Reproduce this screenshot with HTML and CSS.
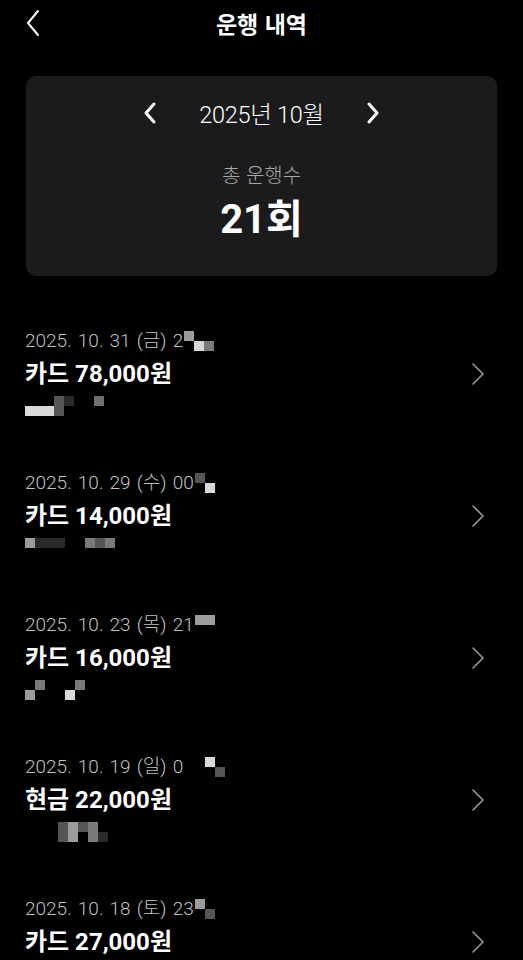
FILE: index.html
```html
<!DOCTYPE html>
<html lang="ko">
<head>
    <meta charset="UTF-8">
    <meta name="viewport" content="width=device-width, initial-scale=1.0">
    <title>운행 내역</title>
    <link rel="stylesheet" href="styles.css">
</head>
<body>
    <header class="topbar">
        <button class="back" aria-label="뒤로">
            <svg width="16" height="28" viewBox="0 0 16 28"><path d="M13 2 L3 14 L13 26" fill="none" stroke="#fff" stroke-width="2" stroke-linecap="round" stroke-linejoin="round"/></svg>
        </button>
        <h1 class="title">운행 내역</h1>
    </header>

    <section class="summary">
        <div class="month-nav">
            <button class="nav-btn" aria-label="이전 달">
                <svg width="14" height="22" viewBox="0 0 14 22"><path d="M11 2 L3 11 L11 20" fill="none" stroke="#fff" stroke-width="3" stroke-linecap="round" stroke-linejoin="round"/></svg>
            </button>
            <span class="month">2025년 10월</span>
            <button class="nav-btn" aria-label="다음 달">
                <svg width="14" height="22" viewBox="0 0 14 22"><path d="M3 2 L11 11 L3 20" fill="none" stroke="#fff" stroke-width="3" stroke-linecap="round" stroke-linejoin="round"/></svg>
            </button>
        </div>
        <div class="total-label">총 운행수</div>
        <div class="total-value">21회</div>
    </section>

    <ul class="trips">
        <li class="trip">
            <div class="trip-info">
                <div class="trip-date">2025. 10. 31 (금) 2<span class="blur"><i class="px g2"></i><i class="px g1 low"></i><i class="px g3 low"></i></span></div>
                <div class="trip-fare">카드 78,000원</div>
                <div class="trip-place"><i class="bar"></i><i class="px g4 tall"></i><i class="px g5"></i><i class="px g6 gap"></i></div>
            </div>
            <svg class="chev" width="14" height="24" viewBox="0 0 14 24"><path d="M2 2 L12 12 L2 22" fill="none" stroke="#9a9a9a" stroke-width="1.6" stroke-linecap="round" stroke-linejoin="round"/></svg>
        </li>
        <li class="trip">
            <div class="trip-info">
                <div class="trip-date">2025. 10. 29 (수) 00<span class="blur"><i class="px g4"></i><i class="px g1 low"></i></span></div>
                <div class="trip-fare">카드 14,000원</div>
                <div class="trip-place"><i class="px g2"></i><i class="px g5"></i><i class="px g5"></i><i class="px g5"></i><i class="px g3 gap"></i><i class="px g4"></i><i class="px g3"></i></div>
            </div>
            <svg class="chev" width="14" height="24" viewBox="0 0 14 24"><path d="M2 2 L12 12 L2 22" fill="none" stroke="#9a9a9a" stroke-width="1.6" stroke-linecap="round" stroke-linejoin="round"/></svg>
        </li>
        <li class="trip">
            <div class="trip-info">
                <div class="trip-date">2025. 10. 23 (목) 21<span class="blur"><i class="px g2"></i><i class="px g2"></i></span></div>
                <div class="trip-fare">카드 16,000원</div>
                <div class="trip-place"><i class="px g2 low"></i><i class="px g3"></i><i class="px g1 low gap"></i><i class="px g3"></i></div>
            </div>
            <svg class="chev" width="14" height="24" viewBox="0 0 14 24"><path d="M2 2 L12 12 L2 22" fill="none" stroke="#9a9a9a" stroke-width="1.6" stroke-linecap="round" stroke-linejoin="round"/></svg>
        </li>
        <li class="trip">
            <div class="trip-info">
                <div class="trip-date">2025. 10. 19 (일) 0<span class="blur wide"><i class="px g1"></i><i class="px g4 low"></i></span></div>
                <div class="trip-fare">현금 22,000원</div>
                <div class="trip-place indent"><i class="px g4 tall"></i><i class="px g2 tall"></i><i class="px g4"></i><i class="px g3 tall"></i><i class="px g5 low"></i></div>
            </div>
            <svg class="chev" width="14" height="24" viewBox="0 0 14 24"><path d="M2 2 L12 12 L2 22" fill="none" stroke="#9a9a9a" stroke-width="1.6" stroke-linecap="round" stroke-linejoin="round"/></svg>
        </li>
        <li class="trip">
            <div class="trip-info">
                <div class="trip-date">2025. 10. 18 (토) 23<span class="blur"><i class="px g2"></i><i class="px g4 low"></i></span></div>
                <div class="trip-fare">카드 27,000원</div>
                <div class="trip-place"></div>
            </div>
            <svg class="chev" width="14" height="24" viewBox="0 0 14 24"><path d="M2 2 L12 12 L2 22" fill="none" stroke="#9a9a9a" stroke-width="1.6" stroke-linecap="round" stroke-linejoin="round"/></svg>
        </li>
    </ul>
</body>
</html>
```

FILE: styles.css
```css
body {
    margin: 0;
    background: #000;
    color: #fff;
    font-family: Roboto, "Noto Sans CJK KR", sans-serif;
    height: 960px;
    overflow: hidden;
}
button {
    background: none;
    border: none;
    padding: 0;
    cursor: pointer;
}
.topbar {
    position: relative;
    height: 45px;
    display: flex;
    align-items: center;
    justify-content: center;
}
.back {
    position: absolute;
    left: 25px;
    top: 9px;
}
.title {
    margin: 0;
    font-size: 23px;
    font-weight: 700;
    font-family: "Noto Sans CJK KR", sans-serif;
}
.summary {
    margin: 31px 26px 0;
    height: 200px;
    box-sizing: border-box;
    background: #1b1b1d;
    border-radius: 10px;
    padding-top: 20px;
    display: flex;
    flex-direction: column;
    align-items: center;
}
.month-nav {
    display: flex;
    align-items: center;
    gap: 42px;
    height: 34px;
}
.nav-btn {
    display: flex;
}
.month {
    font-size: 23.5px;
    font-weight: 300;
    letter-spacing: -0.3px;
}
.total-label {
    margin-top: 31px;
    font-size: 20px;
    line-height: 28px;
    color: #a8a8a8;
    font-family: "Noto Sans CJK KR", sans-serif;
    font-weight: 300;
}
.total-value {
    margin-top: 6px;
    font-size: 40px;
    font-weight: 700;
    line-height: 50px;
}
.trips {
    list-style: none;
    margin: 53px 0 0;
    padding: 0 38px 0 25px;
}
.trip {
    display: flex;
    justify-content: space-between;
    align-items: flex-start;
    height: 142px;
}
.trip-info {
    display: flex;
    flex-direction: column;
}
.trip-date {
    font-size: 19px;
    font-weight: 300;
    color: #c2c2c2;
    line-height: 24px;
    word-spacing: 1.5px;
    display: flex;
    align-items: flex-start;
    white-space: pre;
}
.trip-fare {
    margin-top: 7px;
    font-size: 24px;
    font-weight: 700;
    line-height: 28px;
}
.trip-place {
    margin-top: 8px;
    display: flex;
    align-items: flex-start;
    height: 20px;
}
.trip-place.indent {
    padding-left: 33px;
}
.blur {
    display: inline-flex;
    align-items: flex-start;
    margin-left: 1px;
    padding-top: 2px;
}
.blur.wide {
    margin-left: 22px;
}
.px {
    display: inline-block;
    width: 10px;
    height: 10px;
}
.px.low {
    margin-top: 10px;
}
.px.tall {
    height: 20px;
}
.px.gap {
    margin-left: 20px;
}
.g1 { background: #d8d8d8; }
.g2 { background: #9c9c9c; }
.g3 { background: #7a7a7a; }
.g4 { background: #555; }
.g5 { background: #2a2a2a; }
.g6 { background: #6e6e6e; }
.bar {
    display: inline-block;
    width: 29px;
    height: 10px;
    margin-top: 10px;
    background: #d9d9d9;
}
.chev {
    margin-top: 33px;
}
```
